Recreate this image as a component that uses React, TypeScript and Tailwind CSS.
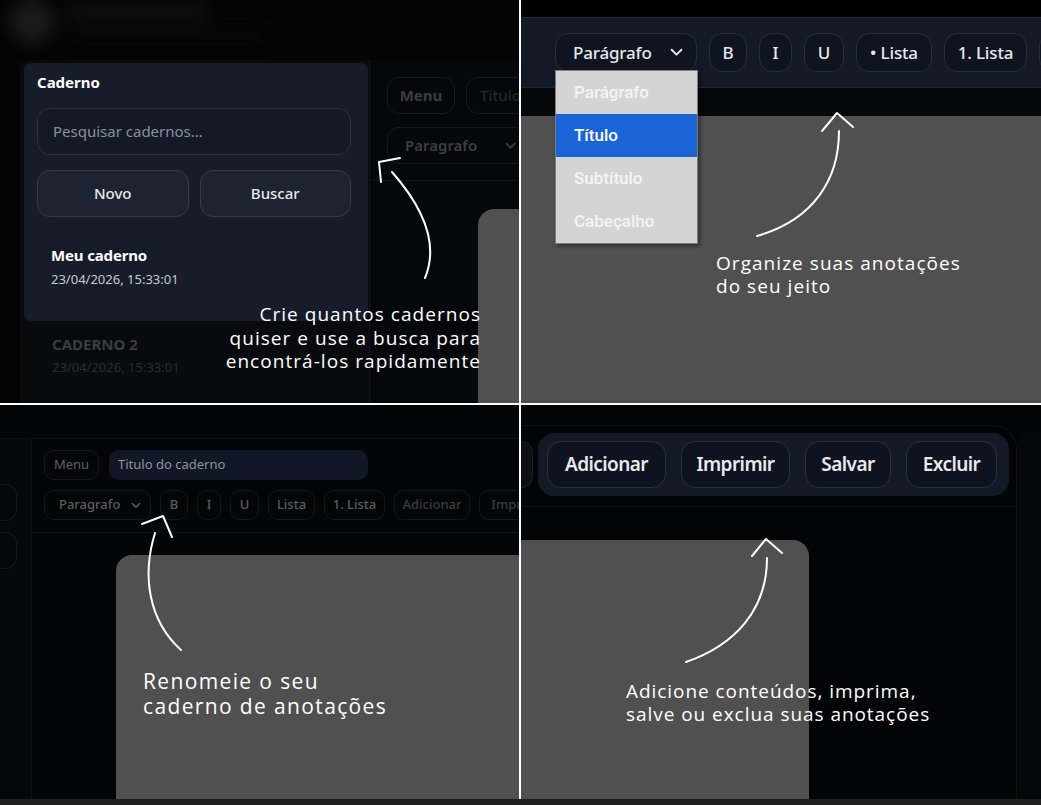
import React from "react";

const UI = "font-['Noto_Sans','Open_Sans',sans-serif]";
const NOTE = "font-['Open_Sans','Noto_Sans',sans-serif]";

function Chevron({ className }: { className?: string }) {
  return (
    <svg viewBox="0 0 12 8" className={className} fill="none" stroke="currentColor" strokeWidth="1.8" strokeLinecap="round" strokeLinejoin="round">
      <path d="M1.5 1.5 L6 6 L10.5 1.5" />
    </svg>
  );
}

function Arrow({ head, curve }: { head: string; curve: string }) {
  return (
    <svg className="absolute inset-0 w-full h-full pointer-events-none" fill="none" stroke="white" strokeWidth="2" strokeLinecap="round" strokeLinejoin="round">
      <path d={head} />
      <path d={curve} />
    </svg>
  );
}

function Q1() {
  return (
    <div className={`relative overflow-hidden bg-[#040405] flex flex-col ${UI}`}>
      <div className="h-[60px] shrink-0 flex items-start gap-[14px] pl-[10px] pt-[0px] blur-[8px]">
        <div className="w-[44px] h-[44px] rounded-full bg-[#1a1a1a] shrink-0" />
        <div className="flex flex-col gap-[12px] pt-[6px]">
          <div className="w-[140px] h-[13px] rounded bg-[#121212]" />
          <div className="w-[200px] h-[8px] rounded bg-[#0b0b0b]" />
        </div>
      </div>
      <div className="flex flex-1 min-h-0">
        <div className="ml-[20px] w-[350px] shrink-0 bg-[#090a0e] border-r border-[#13151b] rounded-tl-lg pt-[3px] pl-[4px] pr-[1px]">
          <div className="h-[258px] rounded-lg bg-[#171c2b] pl-[13px] pr-[17px] pt-[9px]">
            <div className="text-[15px] leading-[20px] font-bold text-white">Caderno</div>
            <div className="mt-[16px] h-[47px] rounded-[13px] border border-[#2b3140] bg-[#141927] flex items-center pl-[15px] text-[15px] text-[#8b909a]">
              Pesquisar cadernos...
            </div>
            <div className="mt-[15px] flex gap-[11px]">
              <div className="flex-1 h-[47px] rounded-[13px] border border-[#363b49] bg-[#1e2332] flex items-center justify-center text-[15px] font-medium text-[#e8e9ec]">
                Novo
              </div>
              <div className="flex-1 h-[47px] rounded-[13px] border border-[#363b49] bg-[#1e2332] flex items-center justify-center text-[15px] font-medium text-[#e8e9ec]">
                Buscar
              </div>
            </div>
            <div className="mt-[28px] pl-[14px]">
              <div className="text-[15px] leading-[20px] font-bold text-white tracking-[-0.01em]">Meu caderno</div>
              <div className="mt-[5px] text-[13px] leading-[18px] text-[#c5c9d0]">23/04/2026, 15:33:01</div>
            </div>
          </div>
          <div className="mt-[13px] pl-[28px]">
            <div className="text-[15px] leading-[20px] font-bold text-[#3a3d44]">CADERNO 2</div>
            <div className="mt-[4px] text-[13px] leading-[18px] text-[#2a2c32]">23/04/2026, 15:33:01</div>
          </div>
        </div>
        <div className="flex-1 min-w-0 flex flex-col bg-[#06070a]">
          <div className="pl-[17px] pt-[17px] pb-[16px] border-b border-[#0f1116]">
            <div className="flex gap-[11px]">
              <div className="w-[68px] h-[37px] shrink-0 rounded-[12px] border border-[#171a20] flex items-center justify-center text-[15px] font-bold text-[#3a3d44]">
                Menu
              </div>
              <div className="w-[200px] h-[37px] shrink-0 rounded-[12px] border border-[#171a20] flex items-center pl-[13px] text-[15px] font-medium text-[#24272d]">
                Titulo
              </div>
            </div>
            <div className="mt-[13px] flex">
              <div className="w-[140px] h-[37px] shrink-0 rounded-[12px] border border-[#171a20] flex items-center pl-[17px] gap-[28px] text-[15px] font-semibold text-[#3b3e45]">
                Paragrafo
                <Chevron className="w-[11px] h-[8px] text-[#3b3e45]" />
              </div>
            </div>
          </div>
          <div className="ml-[108px] mt-[28px] flex-1 rounded-tl-[16px] bg-[#505050]" />
        </div>
      </div>
      <Arrow head="M400 158 L379 162 L381 182" curve="M392 172 C 421 205, 440 242, 425 278" />
      <div className={`absolute right-[38px] top-[303px] text-right text-[19px] leading-[23.5px] tracking-[0.055em] text-white ${NOTE}`}>
        Crie quantos cadernos
        <br />
        quiser e use a busca para
        <br />
        encontrá-los rapidamente
      </div>
    </div>
  );
}

function TB({ w, children }: { w: number; children: React.ReactNode }) {
  return (
    <div
      style={{ width: w }}
      className="h-[39px] shrink-0 rounded-[13px] border border-[#262d3c] bg-[#0f1420] flex items-center justify-center text-[17px] font-medium text-[#e6e8ec] tracking-[-0.01em]"
    >
      {children}
    </div>
  );
}

function Q2() {
  return (
    <div className={`relative overflow-hidden bg-[#030304] flex flex-col ${UI}`}>
      <div className="h-[17px] shrink-0 bg-[#010102]" />
      <div className="h-[71px] shrink-0 bg-[#131926] border-y border-[#1f2636] flex items-center pl-[34px] gap-[12px]">
        <div className="w-[142px] h-[39px] shrink-0 rounded-[13px] border border-[#262d3c] bg-[#0f1420] flex items-center pl-[17px] pr-[13px] justify-between text-[17px] font-medium text-[#e6e8ec] tracking-[-0.01em]">
          Parágrafo
          <Chevron className="w-[13px] h-[9px] text-[#e6e8ec]" />
        </div>
        <TB w={38}>B</TB>
        <TB w={33}>I</TB>
        <TB w={40}>U</TB>
        <TB w={76}>• Lista</TB>
        <TB w={83}>1. Lista</TB>
        <TB w={40}>&nbsp;</TB>
      </div>
      <div className="h-[28px] shrink-0 bg-[#05070a]" />
      <div className="flex-1 bg-[#505050]" />
      <div className="absolute left-[34px] top-[70px] w-[143px] border border-[#7d7d7d] bg-[#d4d4d4] shadow-[2px_2px_4px_rgba(0,0,0,0.45)] font-['Roboto','Noto_Sans',sans-serif] text-[17px] font-medium">
        <div className="h-[43px] flex items-center pl-[18px] text-[#f5f5f5]">Parágrafo</div>
        <div className="h-[43px] flex items-center pl-[18px] bg-[#1b64d5] text-white">Título</div>
        <div className="h-[43px] flex items-center pl-[18px] text-[#f5f5f5]">Subtítulo</div>
        <div className="h-[43px] flex items-center pl-[18px] text-[#f5f5f5]">Cabeçalho</div>
      </div>
      <Arrow head="M301 131 L316 113 L332 127" curve="M318 131 C 318 180, 292 220, 236 236" />
      <div className={`absolute left-[195px] top-[252px] text-[19px] leading-[23px] tracking-[0.055em] text-white ${NOTE}`}>
        Organize suas anotações
        <br />
        do seu jeito
      </div>
    </div>
  );
}

function SB({ w, dim, children }: { w: number; dim?: boolean; children: React.ReactNode }) {
  return (
    <div
      style={{ width: w }}
      className={`h-[30px] shrink-0 rounded-[10px] border border-[#13161c] flex items-center justify-center text-[13px] font-medium ${dim ? "text-[#3a3d43]" : "text-[#5a5d64]"}`}
    >
      {children}
    </div>
  );
}

function Q3() {
  return (
    <div className={`relative overflow-hidden bg-[#040507] flex flex-col ${UI}`}>
      <div className="h-[33px] shrink-0" />
      <div className="flex flex-1 min-h-0 border-t border-[#0c0e13]">
        <div className="w-[32px] shrink-0 border-r border-[#0e1015] bg-[#06070a] pt-[45px] flex flex-col gap-[11px] items-start">
          <div className="w-[17px] h-[37px] rounded-r-[12px] border border-l-0 border-[#15181e]" />
          <div className="w-[17px] h-[37px] rounded-r-[12px] border border-l-0 border-[#15181e]" />
        </div>
        <div className="flex-1 min-w-0 flex flex-col">
          <div className="pl-[12px] pt-[11px] pb-[12px] border-b border-[#0e1015]">
            <div className="flex gap-[10px]">
              <div className="w-[55px] h-[30px] shrink-0 rounded-[10px] border border-[#14171d] flex items-center justify-center text-[13px] text-[#5e6168]">
                Menu
              </div>
              <div className="w-[259px] h-[30px] shrink-0 rounded-[10px] bg-[#111726] flex items-center pl-[9px] text-[13px] text-[#8e929a]">
                Titulo do caderno
              </div>
            </div>
            <div className="mt-[10px] flex gap-[9px]">
              <div className="w-[107px] h-[30px] shrink-0 rounded-[10px] border border-[#13161c] flex items-center pl-[14px] pr-[9px] justify-between text-[13px] font-medium text-[#5a5d64]">
                Paragrafo
                <Chevron className="w-[10px] h-[7px] text-[#5a5d64]" />
              </div>
              <SB w={28}>B</SB>
              <SB w={24}>I</SB>
              <SB w={29}>U</SB>
              <SB w={47}>Lista</SB>
              <SB w={61}>1. Lista</SB>
              <SB w={76} dim>Adicionar</SB>
              <SB w={80} dim>Imprimir</SB>
            </div>
          </div>
          <div className="ml-[84px] mt-[22px] flex-1 rounded-tl-[16px] bg-[#505050]" />
        </div>
      </div>
      <Arrow head="M142 119 L163 111 L172 132" curve="M155 128 C 142 170, 148 215, 181 245" />
      <div className={`absolute left-[143px] top-[264px] text-[21px] leading-[25px] tracking-[0.065em] text-white ${NOTE}`}>
        Renomeie o seu
        <br />
        caderno de anotações
      </div>
    </div>
  );
}

function PB({ w, children }: { w: number; children: React.ReactNode }) {
  return (
    <div
      style={{ width: w }}
      className="h-[47px] shrink-0 rounded-[14px] border border-[#2b3141] bg-[#0f1320] flex items-center justify-center text-[19px] font-semibold text-[#e9eaed] tracking-[-0.03em]"
    >
      {children}
    </div>
  );
}

function Q4() {
  return (
    <div className={`relative overflow-hidden bg-[#030406] flex flex-col ${UI}`}>
      <div className="h-[20px] shrink-0" />
      <div className="flex flex-1 min-h-0">
        <div className="w-[496px] shrink-0 flex flex-col border-r border-t border-[#0e1117] rounded-tr-[24px]">
          <div className="flex items-center pt-[7px] pb-[10px] border-b border-[#0e1117]">
            <div className="w-[12px] h-[47px] shrink-0 rounded-r-[14px] border border-l-0 border-[#1a1e27] bg-[#0b0e15]" />
            <div className="ml-[5px] rounded-[16px] bg-[#131926] flex gap-[15px] pl-[9px] pr-[12px] py-[8px]">
              <PB w={119}>Adicionar</PB>
              <PB w={109}>Imprimir</PB>
              <PB w={86}>Salvar</PB>
              <PB w={91}>Excluir</PB>
            </div>
          </div>
          <div className="mt-[33px] w-[288px] flex-1 bg-[#505050] rounded-tr-[16px]" />
        </div>
        <div className="flex-1 bg-[#05060a]" />
      </div>
      <Arrow head="M231 151 L245 134 L261 148" curve="M246 153 C 246 205, 214 240, 165 257" />
      <div className={`absolute left-[105px] top-[275px] text-[19px] leading-[23px] tracking-[0.05em] text-white ${NOTE}`}>
        Adicione conteúdos, imprima,
        <br />
        salve ou exclua suas anotações
      </div>
    </div>
  );
}

export default function App() {
  return (
    <div className="w-[1041px] h-[805px] bg-[#1e1e1e] overflow-hidden">
      <div className="h-[799px] bg-white grid grid-cols-[519px_520px] grid-rows-[403px_394px] gap-[2px]">
        <Q1 />
        <Q2 />
        <Q3 />
        <Q4 />
      </div>
    </div>
  );
}
